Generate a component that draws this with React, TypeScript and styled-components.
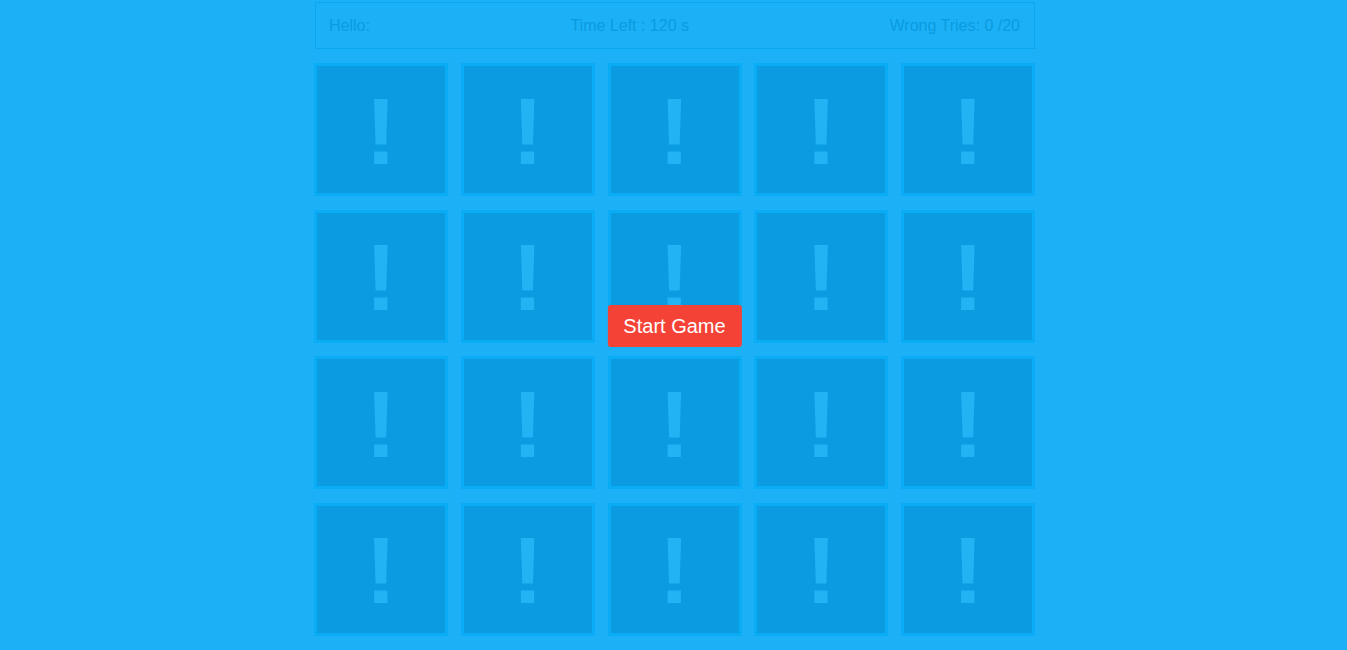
import React from "react";
import styled, { createGlobalStyle } from "styled-components";

const Global = createGlobalStyle`
  html, body {
    margin: 0;
    padding: 0;
    background: #1cb0f6;
    font-family: "Liberation Sans", Arial, sans-serif;
  }
`;

const Page = styled.div`
  display: flex;
  justify-content: center;
  padding-left: 2px;
  padding-top: 2px;
`;

const Container = styled.div`
  width: 721px;
  display: flex;
  flex-direction: column;
`;

const Header = styled.header`
  box-sizing: border-box;
  height: 47px;
  margin: 0 0 14px 1px;
  width: 720px;
  border: 1px solid #0aa7f0;
  display: flex;
  align-items: center;
  justify-content: space-between;
  padding: 0 14px 0 13px;
  font-size: 16px;
  color: #0a9be0;
`;

const Board = styled.div`
  position: relative;
  display: grid;
  grid-template-columns: repeat(5, 134px);
  grid-auto-rows: 133px;
  column-gap: 12.75px;
  row-gap: 13.67px;
`;

const Card = styled.div`
  box-sizing: border-box;
  border: 3px solid #0aacf5;
  background: #0a9be0;
  display: flex;
  align-items: center;
  justify-content: center;
  padding-top: 4px;
`;

const Mark = styled.span`
  font-family: "Liberation Sans", Arial, sans-serif;
  font-weight: bold;
  font-size: 94px;
  line-height: 94px;
  color: #22b3f5;
`;

const StartButton = styled.button`
  position: absolute;
  left: 50%;
  top: 242px;
  transform: translateX(-50%);
  height: 42px;
  padding: 0 16px;
  border: none;
  border-radius: 3px;
  background: #f44336;
  color: #ffffff;
  font-family: "Liberation Sans", Arial, sans-serif;
  font-size: 20px;
  cursor: pointer;
  white-space: nowrap;
`;

export default function App() {
  const cards = Array.from({ length: 20 }, (_, i) => i);
  return (
    <>
      <Global />
      <Page>
        <Container>
          <Header>
            <span>Hello:</span>
            <span>Time Left : 120 s</span>
            <span>Wrong Tries: 0 /20</span>
          </Header>
          <Board>
            {cards.map((i) => (
              <Card key={i}>
                <Mark>!</Mark>
              </Card>
            ))}
            <StartButton>Start Game</StartButton>
          </Board>
        </Container>
      </Page>
    </>
  );
}
